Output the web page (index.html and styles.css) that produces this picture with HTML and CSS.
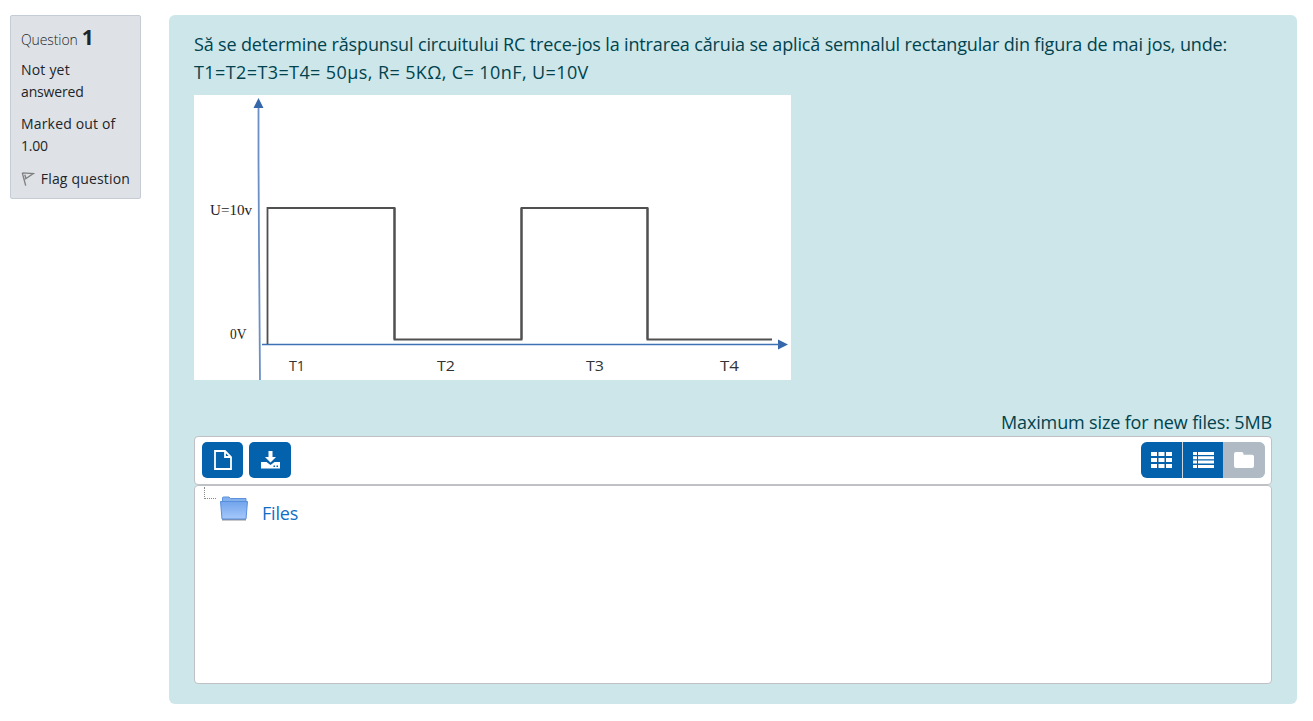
FILE: index.html
```html
<!DOCTYPE html>
<html lang="ro">
<head>
<meta charset="utf-8">
<title>Question 1</title>
<link rel="stylesheet" href="styles.css">
</head>
<body>
<main class="question">
  <aside class="info">
    <h3 class="info-title"><span class="t-question">Question</span> <span class="qno">1</span></h3>
    <div class="state"><span class="t-notyet">Not yet</span><br><span class="t-answered">answered</span></div>
    <div class="grade"><span class="t-marked">Marked out of</span><br><span class="t-grade">1.00</span></div>
    <div class="flag">
      <svg width="14" height="16" viewBox="0 0 14 16" fill="none" stroke="#808080" stroke-width="1.4"><path d="M1.300 1.800 4.800 14.800M1.300 1.800l11.200.6L4 8.200M3.800 3.600l1.300 3.800"/></svg>
      <span class="t-flag">Flag question</span>
    </div>
  </aside>
  <section class="content">
    <p class="prompt"><span class="t-line1">Să se determine răspunsul circuitului RC trece-jos la intrarea căruia se aplică semnalul rectangular din figura de mai jos, unde:</span><br><span class="t-line2">T1=T2=T3=T4= 50µs, R= 5KΩ, C= 10nF, U=10V</span></p>
    <svg class="signal" width="597" height="285" viewBox="0 0 597 285">
      <rect width="597" height="285" fill="#fff"/>
      <path d="M64.500 8V64L65 150 66 285" fill="none" stroke="#6c90c6" stroke-width="1.8"/>
      <path d="M64.500 3 69.500 13H59.500ZM594 249.500 584 254.500V244.500Z" fill="#3567ab"/>
      <path d="M68 249.500H586" stroke="#3f70b3" stroke-width="1.4"/>
      <path d="M73.500 249V113H200.500V244.500H327.500V113H453.500V244.500H578" fill="none" stroke="#505050" stroke-width="1.800"/>
      <path d="M200.500 113V244.500M327.500 113V244.500M453.500 113V244.500" stroke="#505050" stroke-width="2.200"/>
      <g class="axis-serif">
        <text x="16" y="119.500" textLength="42" lengthAdjust="spacingAndGlyphs">U=10v</text>
        <text x="36" y="244" textLength="16.500" lengthAdjust="spacingAndGlyphs">0V</text>
      </g>
      <g class="axis-sans">
        <text x="95" y="276" textLength="16" lengthAdjust="spacingAndGlyphs">T1</text>
        <text x="243" y="276" textLength="18" lengthAdjust="spacingAndGlyphs">T2</text>
        <text x="392" y="276" textLength="18" lengthAdjust="spacingAndGlyphs">T3</text>
        <text x="526" y="276" textLength="19" lengthAdjust="spacingAndGlyphs">T4</text>
      </g>
    </svg>
    <div class="limit"><span class="t-limit">Maximum size for new files: 5MB</span></div>
    <div class="toolbar">
      <div class="actions">
        <button class="btn" aria-label="Add file"><svg width="18" height="20" viewBox="0 0 18 20" fill="none" stroke="#fff" stroke-width="1.800"><path d="M1 1H11L17 7V19H1ZM11 1V7H17"/></svg></button>
        <button class="btn btn-wide" aria-label="Download"><svg width="19" height="18" viewBox="0 0 19 18"><path fill="#fff" d="M7.500 0h4v6h3.500L9.500 11.500 4 6h3.500ZM0 11h5.500l4 3 4-3H19v6.500H0Z"/><path fill="#0362ab" d="M12.500 14.500h1.500v1.500h-1.500zM15.500 14.500H17v1.500h-1.500z"/></svg></button>
      </div>
      <div class="views">
        <button class="view" aria-label="Icons"><svg width="21" height="16" viewBox="0 0 21 16" fill="#fff"><path d="M0 0h6v4H0zM7.500 0h6v4h-6zM15 0h6v4h-6zM0 6h6v4H0zM7.500 6h6v4h-6zM15 6h6v4h-6zM0 12h6v4H0zM7.500 12h6v4h-6zM15 12h6v4h-6z"/></svg></button>
        <button class="view view-list" aria-label="Details"><svg width="21" height="16" viewBox="0 0 21 16" fill="#fff"><path d="M0 0h4v3H0zM5 0h16v3H5zM0 4.300h4v3H0zM5 4.300h16v3H5zM0 8.600h4v3H0zM5 8.600h16v3H5zM0 13h4v3H0zM5 13h16v3H5z"/></svg></button>
        <button class="view view-off" aria-label="Tree"><svg width="20" height="16" viewBox="0 0 20 16" fill="#fff"><path d="M2 0h5.500q2 0 2 2v.8H18q2 0 2 2V14q0 2-2 2H2q-2 0-2-2V2Q0 0 2 0Z"/></svg></button>
      </div>
    </div>
    <div class="files">
      <span class="branch"></span>
      <svg class="folder" width="28" height="25" viewBox="0 0 28 25">
        <defs><linearGradient id="f" x1="0" y1="0" x2="0" y2="1"><stop offset="0" stop-color="#72a4ec"/><stop offset="1" stop-color="#a5c8fb"/></linearGradient></defs>
        <path d="M2 22.500H26V24.500H2Z" fill="#8e9298"/>
        <path d="M2.500 5V2Q2.500 1 3.500 1H9L10.500 2.500H26V6H2.500Z" fill="#82b1ee" stroke="#5c91dc"/>
        <path d="M.5 5.500H27.500L26 23H2Z" fill="url(#f)" stroke="#5b8edb"/>
      </svg>
      <a class="files-link"><span class="t-files">Files</span></a>
    </div>
  </section>
</main>
</body>
</html>
```
FILE: styles.css
```css
* { box-sizing: border-box; }
body { margin: 0; background: #fff; font-family: "Open Sans", "Noto Sans", sans-serif; color: #212529; }
span { white-space: nowrap; }
.question { display: flex; align-items: flex-start; gap: 28px; padding: 15px 16px 0 10px; }
.info { width: 131px; height: 184px; flex: none; padding: 10px; background: #dee2e6; border: 1px solid #c5ccd5; border-radius: 2px; font-size: 14px; line-height: 22px; }
.info-title { margin: 0; height: 22px; line-height: 24px; font-size: 14px; font-weight: 300; display: flex; align-items: baseline; gap: 4px; }
.t-question { letter-spacing: -0.1px; }
.qno { font-size: 21px; font-weight: 700; line-height: 22px; }
.state { margin-top: 11px; }
.t-notyet { letter-spacing: 0.2px; }
.t-answered { letter-spacing: -0.15px; }
.grade { margin-top: 10px; }
.t-marked, .t-flag { letter-spacing: 0.17px; }
.t-grade { letter-spacing: -0.2px; }
.flag { display: flex; align-items: center; gap: 6px; margin-top: 11px; }
.content { flex: 1; height: 689px; padding: 15px 25px 20px; background: #cde6ea; border-radius: 6px; color: #00434e; font-size: 18px; display: flex; flex-direction: column; }
.prompt { margin: 0 0 9px; line-height: 28px; }
.t-line1 { letter-spacing: -0.15px; }
.t-line2 { letter-spacing: 0.4px; }
.signal { display: block; flex: none; }
.axis-serif { font: 15px "Liberation Serif", serif; fill: #222; }
.axis-sans { font: 15px "Open Sans", sans-serif; fill: #333; }
.limit { margin-top: 28px; height: 28px; line-height: 28px; text-align: right; }
.t-limit { letter-spacing: -0.15px; }
.toolbar { display: flex; justify-content: space-between; align-items: flex-start; height: 49px; padding: 5px 6px 5px 7px; background: #fff; border: 1px solid #bfc1c4; border-radius: 4px; flex: none; }
.actions { display: flex; gap: 6px; }
.btn, .view { border: 0; padding: 0; display: flex; align-items: center; justify-content: center; background: #0362ab; }
.btn { width: 41px; height: 36px; border-radius: 5px; }
.btn-wide { width: 42px; }
.views { display: flex; gap: 1px; border-radius: 6px; overflow: hidden; background: #cfd6dc; }
.view { width: 41px; height: 36px; }
.view-list { width: 40px; }
.view-off { width: 42px; background: #b0bac4; margin-left: -1px; }
.files { display: flex; align-items: flex-start; height: 199px; padding: 0 9px; background: #fff; border: 1px solid #bfc1c4; border-radius: 4px; flex: none; }
.branch { width: 12px; height: 12px; margin: 1px 4px 0 0; border: dotted #888; border-width: 0 0 1px 1px; }
.folder { margin-top: 10px; }
.files-link { margin: 13px 0 0 14px; line-height: 28px; color: #0f6fc5; letter-spacing: -0.2px; }
```
